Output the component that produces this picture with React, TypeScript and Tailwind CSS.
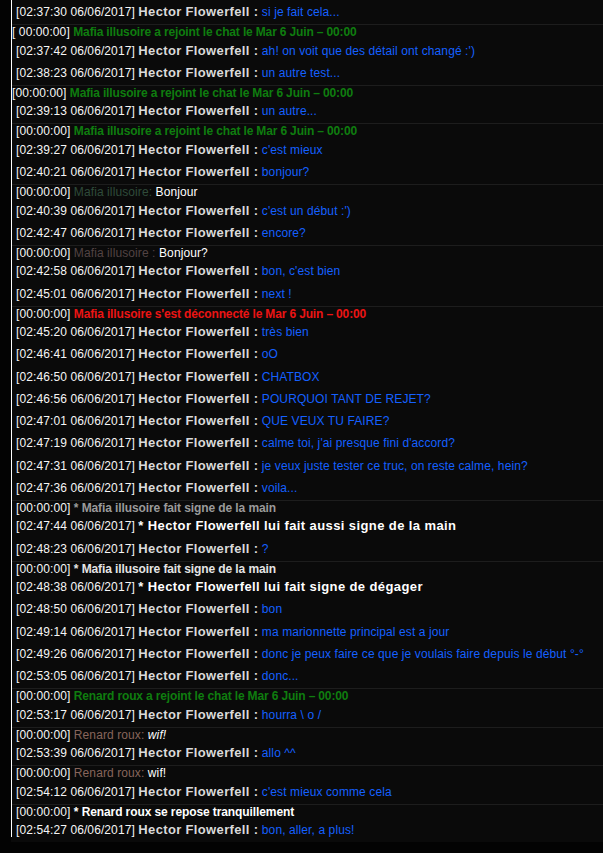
import React from "react";

type Row =
  | { k: "h"; t: string; m: string }
  | { k: "a"; t: string; m: string }
  | { k: "s"; node: React.ReactNode; tight?: boolean; prefix?: string };

const green = (s: string) => (
  <span className="font-bold text-[#0f7d0f] tracking-[-0.15px]">{s}</span>
);

const rows: Row[] = [
  { k: "h", t: "02:37:30", m: "si je fait cela..." },
  { k: "s", tight: true, prefix: "[ 00:00:00]", node: green("Mafia illusoire a rejoint le chat le Mar 6 Juin – 00:00") },
  { k: "h", t: "02:37:42", m: "ah! on voit que des détail ont changé :')" },
  { k: "h", t: "02:38:23", m: "un autre test..." },
  { k: "s", tight: true, node: green("Mafia illusoire a rejoint le chat le Mar 6 Juin – 00:00") },
  { k: "h", t: "02:39:13", m: "un autre..." },
  { k: "s", node: green("Mafia illusoire a rejoint le chat le Mar 6 Juin – 00:00") },
  { k: "h", t: "02:39:27", m: "c'est mieux" },
  { k: "h", t: "02:40:21", m: "bonjour?" },
  {
    k: "s",
    node: (
      <>
        <span className="text-[#2f4a3a]">Mafia illusoire:</span>{" "}
        <span className="text-white">Bonjour</span>
      </>
    ),
  },
  { k: "h", t: "02:40:39", m: "c'est un début :')" },
  { k: "h", t: "02:42:47", m: "encore?" },
  {
    k: "s",
    node: (
      <>
        <span className="text-[#524343]">Mafia illusoire :</span>{" "}
        <span className="text-white">Bonjour?</span>
      </>
    ),
  },
  { k: "h", t: "02:42:58", m: "bon, c'est bien" },
  { k: "h", t: "02:45:01", m: "next !" },
  {
    k: "s",
    node: (
      <span className="font-bold text-[#ec1414] tracking-[-0.15px]">
        Mafia illusoire s'est déconnecté le Mar 6 Juin – 00:00
      </span>
    ),
  },
  { k: "h", t: "02:45:20", m: "très bien" },
  { k: "h", t: "02:46:41", m: "oO" },
  { k: "h", t: "02:46:50", m: "CHATBOX" },
  { k: "h", t: "02:46:56", m: "POURQUOI TANT DE REJET?" },
  { k: "h", t: "02:47:01", m: "QUE VEUX TU FAIRE?" },
  { k: "h", t: "02:47:19", m: "calme toi, j'ai presque fini d'accord?" },
  { k: "h", t: "02:47:31", m: "je veux juste tester ce truc, on reste calme, hein?" },
  { k: "h", t: "02:47:36", m: "voila..." },
  {
    k: "s",
    node: (
      <span className="font-bold text-[#9a9a9a] tracking-[-0.1px]">
        * Mafia illusoire fait signe de la main
      </span>
    ),
  },
  { k: "a", t: "02:47:44", m: "* Hector Flowerfell lui fait aussi signe de la main" },
  { k: "h", t: "02:48:23", m: "?" },
  {
    k: "s",
    node: (
      <span className="font-bold text-[#e4e4e4] tracking-[-0.1px]">
        * Mafia illusoire fait signe de la main
      </span>
    ),
  },
  { k: "a", t: "02:48:38", m: "* Hector Flowerfell lui fait signe de dégager" },
  { k: "h", t: "02:48:50", m: "bon" },
  { k: "h", t: "02:49:14", m: "ma marionnette principal est a jour" },
  { k: "h", t: "02:49:26", m: "donc je peux faire ce que je voulais faire depuis le début °-°" },
  { k: "h", t: "02:53:05", m: "donc..." },
  { k: "s", node: green("Renard roux a rejoint le chat le Mar 6 Juin – 00:00") },
  { k: "h", t: "02:53:17", m: "hourra \\ o /" },
  {
    k: "s",
    node: (
      <>
        <span className="text-[#87655b]">Renard roux:</span>{" "}
        <span className="italic text-white">wif!</span>
      </>
    ),
  },
  { k: "h", t: "02:53:39", m: "allo ^^" },
  {
    k: "s",
    node: (
      <>
        <span className="text-[#87655b]">Renard roux:</span>{" "}
        <span className="text-white">wif!</span>
      </>
    ),
  },
  { k: "h", t: "02:54:12", m: "c'est mieux comme cela" },
  {
    k: "s",
    node: (
      <span className="font-bold text-white tracking-[-0.1px]">
        * Renard roux se repose tranquillement
      </span>
    ),
  },
  { k: "h", t: "02:54:27", m: "bon, aller, a plus!" },
];

function Stamp({ t }: { t: string }) {
  return <span className="text-[#f6f6f6]">[{t} 06/06/2017]</span>;
}

export default function App() {
  return (
    <div className="min-h-[853px] bg-[#030303] font-['Liberation_Sans',Arial,sans-serif] text-[12px] leading-[14px] tracking-[0.1px]">
      <div className="ml-[11px] bg-[#0a0a0a] pb-[5px]">
        <div className="border-l border-white pt-[1.75px]">
          {rows.map((r, i) => {
            const last = i === rows.length - 1;
            if (r.k === "s") {
              return (
                <div
                  key={i}
                  className={
                    "whitespace-nowrap border-t border-[#1d1d1d] pb-[1.25px] " +
                    (r.tight ? "pl-0" : "pl-[4px]")
                  }
                >
                  <span className="text-[#f6f6f6]">{r.prefix ?? "[00:00:00]"}</span>{" "}
                  {r.node}
                </div>
              );
            }
            return (
              <div
                key={i}
                className={
                  "whitespace-nowrap pl-[4px] pt-[3.25px] " + (last ? "pb-0" : "pb-[5px]")
                }
              >
                <Stamp t={r.t} />{" "}
                {r.k === "h" ? (
                  <>
                    <span className="font-bold text-[13px] text-[#dadada] tracking-[0.35px]">
                      Hector Flowerfell :
                    </span>{" "}
                    <span className="text-[#1560ff]">{r.m}</span>
                  </>
                ) : (
                  <span className="font-bold text-[13px] text-white tracking-[0.4px]">{r.m}</span>
                )}
              </div>
            );
          })}
        </div>
      </div>
    </div>
  );
}
